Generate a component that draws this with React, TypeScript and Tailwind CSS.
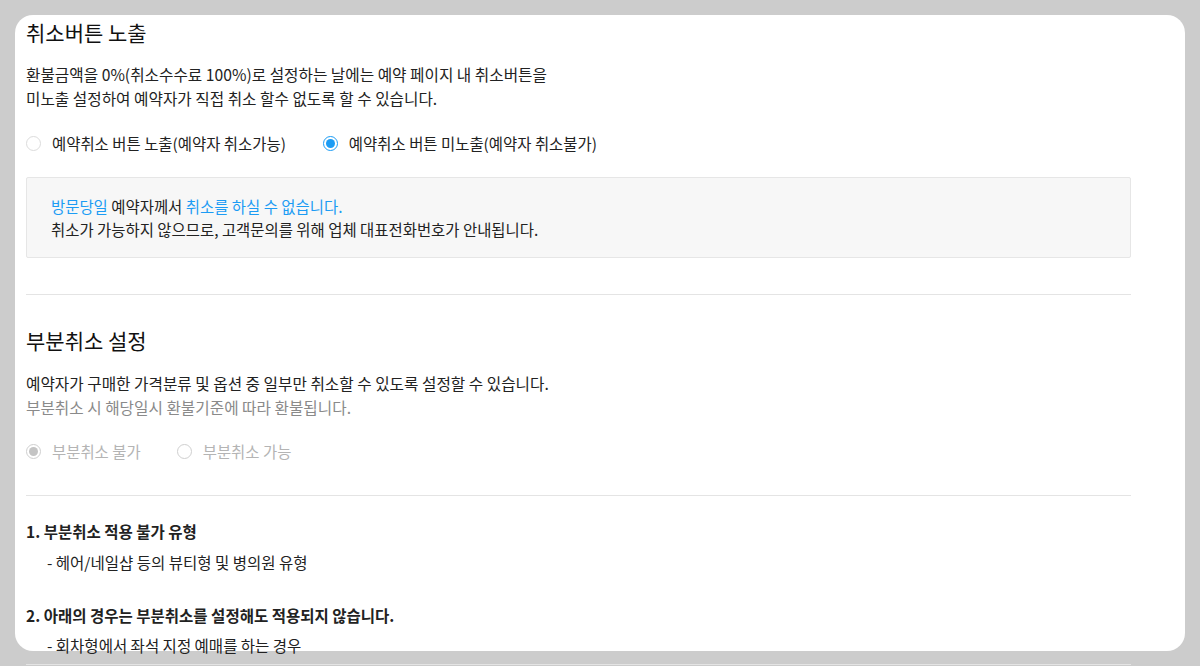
import React from "react";

const font = { fontFamily: '"Noto Sans CJK KR", "Noto Sans", sans-serif' };

type RadioProps = { label: string; checked?: boolean; disabled?: boolean };

const Radio = ({ label, checked, disabled }: RadioProps) => {
  const ring = disabled
    ? "border-[#cfcfcf] bg-white"
    : checked
      ? "border-[#1c9cf4] bg-white"
      : "border-[#dcdcdc] bg-white";
  const dot = disabled ? "bg-[#c4c4c4]" : "bg-[#1c9cf4]";
  return (
    <label className="flex items-center gap-[11px] h-6">
      <span className={`flex items-center justify-center w-[15px] h-[15px] rounded-full border ${ring}`}>
        {checked && <span className={`w-[9px] h-[9px] rounded-full ${dot}`} />}
      </span>
      <span className={`text-[15.45px] leading-6 ${disabled ? "text-[#b4b4b4]" : "text-[#222]"}`}>{label}</span>
    </label>
  );
};

const Divider = ({ className }: { className?: string }) => (
  <div className={`h-px w-full bg-[#e4e4e4] ${className ?? ""}`} />
);

const App = () => {
  return (
    <div className="w-[1200px] h-[666px] overflow-hidden bg-[#cccccc] p-[15px]" style={font}>
      <div className="h-[636px] w-[1170px] bg-white rounded-[18px] pl-[11px]">
        <div className="w-[1105px] pt-[3px]">
          <h2 className="text-[21px] leading-7 text-[#111] font-normal">취소버튼 노출</h2>
          <p className="mt-[17px] text-[15.7px] leading-6 text-[#222]">
            환불금액을 0%(취소수수료 100%)로 설정하는 날에는 예약 페이지 내 취소버튼을
            <br />
            미노출 설정하여 예약자가 직접 취소 할수 없도록 할 수 있습니다.
          </p>
          <div className="mt-5 flex items-center gap-[37px]">
            <Radio label="예약취소 버튼 노출(예약자 취소가능)" />
            <Radio label="예약취소 버튼 미노출(예약자 취소불가)" checked />
          </div>
          <div className="mt-[22px] border border-[#e6e6e6] bg-[#f7f7f7] rounded-[2px] pl-6 pt-[17px] pb-[16px] text-[15.45px] leading-[23px] text-[#222]">
            <p>
              <span className="text-[#1c9cf4]">방문당일</span> 예약자께서{" "}
              <span className="text-[#1c9cf4]">취소를 하실 수 없습니다.</span>
            </p>
            <p>취소가 가능하지 않으므로, 고객문의를 위해 업체 대표전화번호가 안내됩니다.</p>
          </div>

          <Divider className="mt-9" />

          <h2 className="mt-[31px] text-[21px] leading-7 text-[#111] font-normal">부분취소 설정</h2>
          <p className="mt-[18px] text-[15.7px] leading-6 text-[#222]">
            예약자가 구매한 가격분류 및 옵션 중 일부만 취소할 수 있도록 설정할 수 있습니다.
          </p>
          <p className="text-[15.7px] leading-6 text-[#8a8a8a]">부분취소 시 해당일시 환불기준에 따라 환불됩니다.</p>
          <div className="mt-[19px] flex items-center gap-[36px]">
            <Radio label="부분취소 불가" checked disabled />
            <Radio label="부분취소 가능" disabled />
          </div>

          <Divider className="mt-8" />

          <p className="mt-[23px] text-[15.5px] leading-6 font-semibold text-[#222]">1. 부분취소 적용 불가 유형</p>
          <p className="mt-[7px] pl-[21px] text-[15.5px] leading-6 text-[#222]">- 헤어/네일샵 등의 뷰티형 및 병의원 유형</p>
          <p className="mt-[29px] text-[15.5px] leading-6 font-semibold text-[#222]">
            2. 아래의 경우는 부분취소를 설정해도 적용되지 않습니다.
          </p>
          <p className="mt-[6px] pl-[21px] text-[15.5px] leading-6 text-[#222]">- 회차형에서 좌석 지정 예매를 하는 경우</p>
          <Divider className="mt-[7px] bg-[#b8b8b8]" />
        </div>
      </div>
    </div>
  );
};

export default App;
